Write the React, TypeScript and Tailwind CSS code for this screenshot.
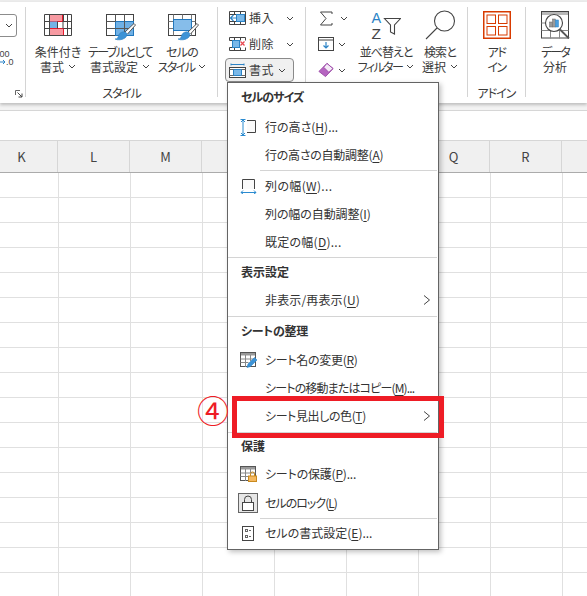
import React from "react";

const ff = "font-['Noto_Sans_CJK_JP','Noto_Sans',sans-serif] [font-feature-settings:'palt']";

function Chev({ className = "" }: { className?: string }) {
  return (
    <svg width="8" height="5" viewBox="0 0 8 5" className={className}>
      <path d="M1 1l3 3 3-3" fill="none" stroke="#444" strokeWidth="1" />
    </svg>
  );
}

function Brush({ x, y }: { x: number; y: number }) {
  return (
    <g transform={`translate(${x} ${y})`}>
      <path d="M10 10L19 1.5l1.5 1.5L12.5 12" fill="#fff" stroke="#555" strokeWidth="1" />
      <path d="M0 17c3 0 3-2 4-4.500 1.500-2.500 5-3.500 7-2 1.500 1.500 1 4-1 5.500-3 2-7 2.500-10 1z" fill="#3d93d6" stroke="#2f7fbf" strokeWidth=".6" />
    </g>
  );
}

function CondIcon() {
  return (
    <svg width="28" height="23" viewBox="0 0 28 23">
      <rect x=".5" y=".5" width="27" height="21" fill="#fff" />
      <rect x="5.500" y=".5" width="13" height="7" fill="#f79aa2" stroke="#e8192c" />
      <rect x="5.500" y="7.500" width="8" height="7" fill="#74b3e6" />
      <rect x="5.500" y="14.500" width="14" height="7" fill="#f79aa2" stroke="#e8192c" />
      <path d="M.5.5h27v21H.5zM.5 7.500h5M18.500 7.500h9M.5 14.500h5M19.500 14.500h8M13.500 7.500v7M19.500.5v7M19 7.500v7M23.500.5v21M5.500.5v21" fill="none" stroke="#444" />
    </svg>
  );
}
function TableIcon() {
  return (
    <svg width="30" height="27" viewBox="0 0 30 27">
      <rect x=".5" y=".5" width="27" height="21" fill="#fff" stroke="#444" />
      <rect x="9.500" y="7.500" width="18" height="14" fill="#6fb0e5" stroke="#2177bd" />
      <path d="M.5 7.500h9M.5 14.500h9M9.500.5v7M18.500.5v21M9.500 14.500h18" fill="none" stroke="#555" strokeWidth="1" />
      <Brush x={9} y={8} />
    </svg>
  );
}
function CellStyleIcon() {
  return (
    <svg width="31" height="27" viewBox="0 0 31 27">
      <rect x=".5" y=".5" width="27" height="21" fill="#fff" stroke="#444" />
      <path d="M.5 7.500h27M.5 14.500h27M5.500.5v21M14.500.5v7M23.500.5v21" fill="none" stroke="#777" />
      <rect x="5.500" y="5.500" width="18" height="11" fill="#86bdea" stroke="#2177bd" />
      <Brush x={10} y={8} />
    </svg>
  );
}
function InsertIcon() {
  return (
    <svg width="17" height="14" viewBox="0 0 17 14">
      <path d="M.5.5h16v13H.5zM.5 3.500h16M.5 10.500h16M5.500.5v3M5.500 10.500v3M11.500.5v3M11.500 10.500v3" fill="none" stroke="#444" />
      <rect x="7.500" y="3.500" width="8" height="7" fill="#7ab8e8" stroke="#2b83c6" />
      <path d="M8 7H1.500M4.500 4L1.500 7l3 3" fill="none" stroke="#2b83c6" strokeWidth="1.200" />
    </svg>
  );
}
function DeleteIcon() {
  return (
    <svg width="17" height="14" viewBox="0 0 17 14">
      <path d="M.5.5h16M.5 13.500h16M.5.5v3M.5 10.500v3M16.500.5v3M16.500 10.500v3M5.500.5v3M5.500 10.500v3M11.500.5v3M11.500 10.500v3M.5 3.500h5M.5 10.500h5" fill="none" stroke="#444" />
      <rect x="3.500" y="3.500" width="7" height="7" fill="#7ab8e8" stroke="#2b83c6" />
      <path d="M11.500 4.500l4 4M15.500 4.500l-4 4" stroke="#e8474f" strokeWidth="1.300" fill="none" />
    </svg>
  );
}
function FormatIcon() {
  return (
    <svg width="17" height="15" viewBox="0 0 17 15">
      <path d="M2 1.500h13M2 .5v2M15 .5v2" stroke="#2b83c6" fill="none" />
      <rect x=".5" y="4.500" width="16" height="10" fill="#fff" stroke="#444" />
      <rect x="4.500" y="6.500" width="8" height="6" fill="#7ab8e8" stroke="#2b83c6" />
      <path d="M.5 6.500h4M12.500 6.500h4M.5 12.500h4M12.500 12.500h4" stroke="#666" fill="none" />
    </svg>
  );
}
function SigmaIcon() {
  return (
    <svg width="14" height="15" viewBox="0 0 14 15">
      <path d="M13 3V1H1.500l5.500 6.500-5.500 6.500H13v-2" fill="none" stroke="#444" strokeWidth="1" />
    </svg>
  );
}
function FillIcon() {
  return (
    <svg width="16" height="14" viewBox="0 0 16 14">
      <rect x=".5" y=".5" width="15" height="13" fill="#fff" stroke="#444" />
      <path d="M.5 3h15" stroke="#444" fill="none" />
      <path d="M8 5v6M5.500 8.500L8 11l2.500-2.500" stroke="#2b83c6" strokeWidth="1.200" fill="none" />
    </svg>
  );
}
function EraserIcon() {
  return (
    <svg width="17" height="16" viewBox="0 0 17 16">
      <path d="M1 9.500L9.500 1l6.500 5.500L8 15z" fill="#b565c0" stroke="#9c4aa8" />
      <path d="M6 5l5.500 5.500L16 6.500 9.500 1z" fill="#f4eaf6" stroke="#9c4aa8" />
    </svg>
  );
}
function SortIcon() {
  return (
    <svg width="30" height="27" viewBox="0 0 30 27">
      <text x="0.500" y="10.500" fontSize="14.500" fontFamily="'Liberation Sans',sans-serif" fill="#2b83c6">A</text>
      <text x="0.500" y="26.500" fontSize="15.500" fontFamily="'Liberation Sans',sans-serif" fill="#444">Z</text>
      <path d="M13.500 6.500h16l-6 6.500v9l-4-2v-7z" fill="#fff" stroke="#444" strokeWidth="1.100" />
    </svg>
  );
}
function SearchIcon() {
  return (
    <svg width="31" height="30" viewBox="0 0 31 30">
      <circle cx="19.500" cy="11" r="10" fill="#fff" stroke="#444" strokeWidth="1.100" />
      <path d="M12 18L1 29" stroke="#444" strokeWidth="1.100" />
    </svg>
  );
}
function AddinIcon() {
  return (
    <svg width="28" height="28" viewBox="0 0 28 28">
      <rect x=".75" y=".75" width="26.500" height="26.500" fill="#fff" stroke="#d83b01" strokeWidth="1.500" />
      <rect x="4" y="4" width="8.500" height="8.500" fill="none" stroke="#d83b01" />
      <rect x="15.500" y="4" width="8.500" height="8.500" fill="none" stroke="#d83b01" />
      <rect x="4" y="15.500" width="8.500" height="8.500" fill="none" stroke="#d83b01" />
      <rect x="15.500" y="15.500" width="8.500" height="8.500" fill="none" stroke="#d83b01" />
    </svg>
  );
}
function AnalysisIcon() {
  return (
    <svg width="29" height="28" viewBox="0 0 29 28">
      <rect x=".5" y=".5" width="27" height="26.500" fill="#fff" stroke="#444" />
      <rect x="1" y="1" width="26" height="3" fill="#b8b8b8" />
      <path d="M.5 19.500h27M9.500 19.500v8M18.500 19.500v8M.5 12h4" stroke="#888" fill="none" />
      <circle cx="13" cy="12" r="8.500" fill="#fff" stroke="#444" strokeWidth="1.100" />
      <rect x="8.500" y="11" width="2.800" height="5" fill="#999" stroke="#666" strokeWidth=".5" />
      <rect x="11.500" y="8" width="2.800" height="8" fill="#999" stroke="#666" strokeWidth=".5" />
      <rect x="14.500" y="9" width="3" height="7" fill="#4a9ede" stroke="#2b83c6" strokeWidth=".5" />
      <path d="M19 18.500l9 9" stroke="#555" strokeWidth="1.800" />
    </svg>
  );
}

function Large({
  w,
  icon,
  lines,
  chev,
  t1 = "",
  t2 = "",
}: {
  w: string;
  icon: React.ReactNode;
  lines: string[];
  chev?: boolean;
  t1?: string;
  t2?: string;
}) {
  return (
    <div className={`${w} shrink-0 flex flex-col items-center`}>
      <div className="h-[42px] pt-[4px] flex items-center justify-center">{icon}</div>
      <div className={`text-center text-[12px] leading-[15px] whitespace-nowrap ${t1}`}>{lines[0]}</div>
      <div className="text-center text-[12px] leading-[15px] whitespace-nowrap flex items-center justify-center gap-[4px]">
        <span className={t2}>{lines[1]}</span>
        {chev && <Chev />}
      </div>
    </div>
  );
}

function RibSep() {
  return <div className="w-px h-[90px] mt-[5px] bg-[#d4d4d4] shrink-0" />;
}

function GroupLabel({ children, t = "" }: { children: React.ReactNode; t?: string }) {
  return <div className={`h-[18px] mb-px flex items-center justify-center text-[12px] whitespace-nowrap ${t}`}>{children}</div>;
}

function Ribbon() {
  return (
    <div className="h-[101px] bg-white flex shadow-[0_2px_3px_rgba(0,0,0,0.22)] relative">
      <div className="w-[25px] shrink-0 overflow-hidden flex flex-col">
        <div className="-ml-[20px] mt-[12px] w-[37px] h-[23px] shrink-0 border border-[#8c8c8c] rounded-[3px] flex items-center justify-end pr-[3px]">
          <Chev />
        </div>
        <svg width="16" height="16" viewBox="0 0 16 16" className="mt-[13px] shrink-0">
          <text x="-3" y="7" fontSize="9" fontFamily="'Liberation Sans',sans-serif" fill="#444">.00</text>
          <text x="6" y="15" fontSize="9" fontFamily="'Liberation Sans',sans-serif" fill="#444">.0</text>
          <path d="M-1 12h6M3 10l2 2-2 2" stroke="#2b83c6" fill="none" />
        </svg>
        <svg width="8" height="8" viewBox="0 0 8 8" className="ml-[15px] mt-[24px] shrink-0">
          <path d="M.5 5V.5H5" stroke="#666" fill="none" />
          <path d="M2.500 2.500L7 7M7 3.500V7H3.500" stroke="#444" fill="none" />
        </svg>
      </div>
      <RibSep />

      <div className="w-[191px] shrink-0 flex flex-col">
        <div className="flex flex-1 pl-px">
          <Large w="w-[62px]" icon={<CondIcon />} lines={["条件付き", "書式"]} chev />
          <Large w="w-[62px]" t1="tracking-[-1.6px]" icon={<div className="pl-[2px] pt-[4px]"><TableIcon /></div>} lines={["テーブルとして", "書式設定"]} chev />
          <Large w="w-[62px]" t1="tracking-[-0.8px]" t2="tracking-[-1.6px]" icon={<div className="pl-[2px] pt-[4px]"><CellStyleIcon /></div>} lines={["セルの", "スタイル"]} chev />
        </div>
        <GroupLabel t="tracking-[-1.2px]">スタイル</GroupLabel>
      </div>
      <RibSep />

      <div className="w-[87px] shrink-0 flex flex-col pt-[3px] pl-[7px] text-[12px]">
        <div className="h-[26px] flex items-center w-[69px] pl-[4px]">
          <InsertIcon />
          <span className="ml-[3px] tracking-[0.5px]">挿入</span>
          <Chev className="ml-[12px]" />
        </div>
        <div className="h-[26px] flex items-center w-[69px] pl-[4px]">
          <DeleteIcon />
          <span className="ml-[3px] tracking-[0.5px]">削除</span>
          <Chev className="ml-[12px]" />
        </div>
        <div className="h-[24px] mt-px flex items-center w-[69px] pl-[3px] border border-[#8a8a8a] rounded-[4px] bg-[#f0f0f0]">
          <FormatIcon />
          <span className="ml-[3px] tracking-[0.5px]">書式</span>
          <Chev className="ml-[4px]" />
        </div>
      </div>
      <RibSep />

      <div className="w-[161px] shrink-0 flex">
        <div className="w-[51px] shrink-0 flex flex-col pt-[3px] pl-[12px]">
          <div className="h-[26px] flex items-center">
            <div className="w-[16px] flex justify-center"><SigmaIcon /></div>
            <Chev className="ml-[6px]" />
          </div>
          <div className="h-[26px] flex items-center">
            <div className="w-[16px] flex justify-center"><FillIcon /></div>
            <Chev className="ml-[4px]" />
          </div>
          <div className="h-[26px] flex items-center">
            <div className="w-[16px] flex justify-center"><EraserIcon /></div>
            <Chev className="ml-[4px]" />
          </div>
        </div>
        <Large w="w-[58px]" t1="tracking-[-1px]" t2="tracking-[-1.6px]" icon={<SortIcon />} lines={["並べ替えと", "フィルター"]} chev />
        <Large w="w-[50px]" t1="tracking-[-0.8px]" icon={<SearchIcon />} lines={["検索と", "選択"]} chev />
      </div>
      <RibSep />

      <div className="w-[57px] shrink-0 flex flex-col">
        <div className="flex-1">
          <Large w="w-[57px]" t1="tracking-[-1.6px]" t2="tracking-[-1.6px]" icon={<AddinIcon />} lines={["アド", "イン"]} />
        </div>
        <GroupLabel t="tracking-[-1px]">アドイン</GroupLabel>
      </div>
      <RibSep />

      <Large w="w-[58px]" t1="tracking-[-2px]" icon={<AnalysisIcon />} lines={["データ", "分析"]} />
    </div>
  );
}

function Sep({ className }: { className: string }) {
  return <div className={`h-px bg-[#d4d4d4] mr-px ${className}`} />;
}

function Heading({ h, children, t = "" }: { h: string; children: React.ReactNode; t?: string }) {
  return <div className={`${h} pl-[13px] pb-[2px] flex items-center font-bold text-[12px] ${t}`}>{children}</div>;
}

function Item({
  icon,
  label,
  k,
  tail = "",
  h = "h-[28px]",
  t = "",
  arrow,
}: {
  icon?: React.ReactNode;
  label: string;
  k: string;
  tail?: string;
  h?: string;
  t?: string;
  arrow?: boolean;
}) {
  return (
    <div className={`${h} flex items-center text-[12px]`}>
      <div className="w-[37px] shrink-0 pl-[3px] flex justify-center">{icon}</div>
      <span className={`whitespace-nowrap ${t}`}>
        {label}(<span className="underline underline-offset-2">{k}</span>){tail}
      </span>
      {arrow && (
        <svg width="8" height="10" viewBox="0 0 8 10" className="ml-auto mr-[7px]">
          <path d="M1 .5L6.500 5 1 9.500" fill="none" stroke="#444" strokeWidth="1" />
        </svg>
      )}
    </div>
  );
}

function RowHIcon() {
  return (
    <svg width="16" height="17" viewBox="0 0 16 17">
      <path d="M7 1.500h8.500v12H7" fill="#fafafa" stroke="#444" />
      <path d="M3 1v15M1 3l2-2 2 2M1 14l2 2 2-2M.5.5h5M.5 16.500h5" fill="none" stroke="#2b8bd0" strokeWidth="1" />
    </svg>
  );
}
function ColWIcon() {
  return (
    <svg width="17" height="15" viewBox="0 0 17 15">
      <path d="M2.500 10V.5h12V10" fill="#fafafa" stroke="#444" />
      <path d="M1 13.500h15M3 11.500l-2 2 2 1.500M14 11.500l2 2-2 1.500" fill="none" stroke="#2b8bd0" />
    </svg>
  );
}
function RenameIcon() {
  return (
    <svg width="17" height="16" viewBox="0 0 17 16">
      <rect x=".5" y=".5" width="15" height="14" fill="#fff" stroke="#555" />
      <rect x="1" y="1" width="14" height="2.500" fill="#999" />
      <path d="M.5 7h15M.5 10.500h8M5.500 3v12M10.500 3v6" stroke="#888" fill="none" />
      <path d="M7 15.500l1-3.500 6.500-6.500 2.500 2.500-6.500 6.500z" fill="#3d93d6" stroke="#2b83c6" strokeWidth=".6" />
    </svg>
  );
}
function ProtectIcon() {
  return (
    <svg width="17" height="16" viewBox="0 0 17 16">
      <rect x=".5" y=".5" width="15" height="14" fill="#fff" stroke="#555" />
      <rect x="1" y="1" width="14" height="2.500" fill="#999" />
      <path d="M.5 7h15M.5 10.500h8M5.500 3v12M10.500 3v4" stroke="#888" fill="none" />
      <rect x="8.500" y="10" width="8" height="5.500" fill="#f4b860" stroke="#c98a1e" />
      <path d="M10.500 10V8a2 2 0 0 1 4 0v2" fill="none" stroke="#c98a1e" />
    </svg>
  );
}
function LockIcon() {
  return (
    <div className="w-[20px] h-[20px] border border-[#666] bg-[#e6e6e6] flex items-center justify-center">
      <svg width="14" height="16" viewBox="0 0 14 16">
        <rect x="1.500" y="7.500" width="11" height="8" fill="#fff" stroke="#444" />
        <path d="M3.500 7.500V4.500a3.500 3.500 0 0 1 7 0v3" fill="none" stroke="#444" />
      </svg>
    </div>
  );
}
function CellFmtIcon() {
  return (
    <svg width="12" height="15" viewBox="0 0 12 15">
      <rect x=".5" y=".5" width="11" height="14" fill="#fff" stroke="#444" />
      <rect x="3.500" y="3.500" width="2" height="2" fill="none" stroke="#666" />
      <rect x="3.500" y="9.500" width="2" height="2" fill="none" stroke="#666" />
      <path d="M7 4.500h2M7 10.500h2" stroke="#666" />
    </svg>
  );
}

function Menu() {
  return (
    <div className="absolute left-[227px] top-[82px] w-[212px] h-[468px] bg-white border border-[#646464] shadow-[2px_2px_5px_rgba(0,0,0,0.25)] text-[#333]">
      <Heading h="h-[30px]" t="tracking-[-1px]">セルのサイズ</Heading>
      <Item icon={<RowHIcon />} label="行の高さ" k="H" tail="..." />
      <Item label="行の高さの自動調整" k="A" t="tracking-[-0.25px]" />
      <Sep className="mt-px mb-px ml-[32px]" />
      <Item icon={<ColWIcon />} label="列の幅" k="W" tail="..." t="tracking-[0.35px]" />
      <Item label="列の幅の自動調整" k="I" t="tracking-[-0.1px]" />
      <Item label="既定の幅" k="D" tail="..." t="tracking-[0.25px]" />
      <Sep className="mt-px mb-px" />
      <Heading h="h-[27px]">表示設定</Heading>
      <Item label="非表示/再表示" k="U" arrow t="tracking-[0.15px]" />
      <Sep className="mt-[2px]" />
      <Heading h="h-[29px]" t="tracking-[-0.3px]">シートの整理</Heading>
      <Item icon={<RenameIcon />} label="シート名の変更" k="R" t="tracking-[-0.3px]" />
      <Item label="シートの移動またはコピー" k="M" tail="..." t="tracking-[-0.85px]" />
      <Item label="シート見出しの色" k="T" arrow t="tracking-[-0.4px]" />
      <Sep className="mt-[2px]" />
      <Heading h="h-[27px]">保護</Heading>
      <Item icon={<ProtectIcon />} label="シートの保護" k="P" tail="..." t="tracking-[-0.2px]" />
      <Item icon={<LockIcon />} label="セルのロック" k="L" h="h-[29px]" t="tracking-[-1px]" />
      <Sep className="mt-px ml-[32px]" />
      <Item icon={<CellFmtIcon />} label="セルの書式設定" k="E" tail="..." />
    </div>
  );
}

const cols = ["K", "L", "M", "N", "O", "P", "Q", "R", "S"];

export default function App() {
  return (
    <div className={`relative w-[587px] h-[596px] overflow-hidden bg-white flex flex-col text-[#3a3a3a] ${ff}`}>
      <div className="h-[2px] shrink-0 bg-[#ececec]" />
      <Ribbon />
      <div className="h-[8px] shrink-0 bg-[#f3f3f3] border-b border-[#d6d6d6]" />
      <div className="h-[30px] shrink-0 bg-white border-b border-[#d6d6d6]" />
      <div className="h-[32px] shrink-0 bg-[#f0f0f0] border-b border-[#ababab] flex -ml-[14px] text-[13px] text-[#444]">
        {cols.map((c) => (
          <div key={c} className="w-[72px] shrink-0 flex items-center justify-center border-r border-[#d6d6d6]">
            {c}
          </div>
        ))}
      </div>
      <div className="flex-1 bg-white bg-[linear-gradient(to_right,#e0e0e0_1px,transparent_1px),linear-gradient(to_bottom,#e0e0e0_1px,transparent_1px)] bg-[size:72px_25px] bg-[position:58px_24px]" />
      <Menu />
      <div className="absolute left-[232px] top-[396px] w-[212px] h-[42px] border-[5px] border-[#ee1c25]" />
      <div className="absolute left-[196px] top-[392px] w-[34px] h-[34px] flex items-center justify-center text-[32px] leading-none text-[#ee1c25]">
        ④
      </div>
    </div>
  );
}
